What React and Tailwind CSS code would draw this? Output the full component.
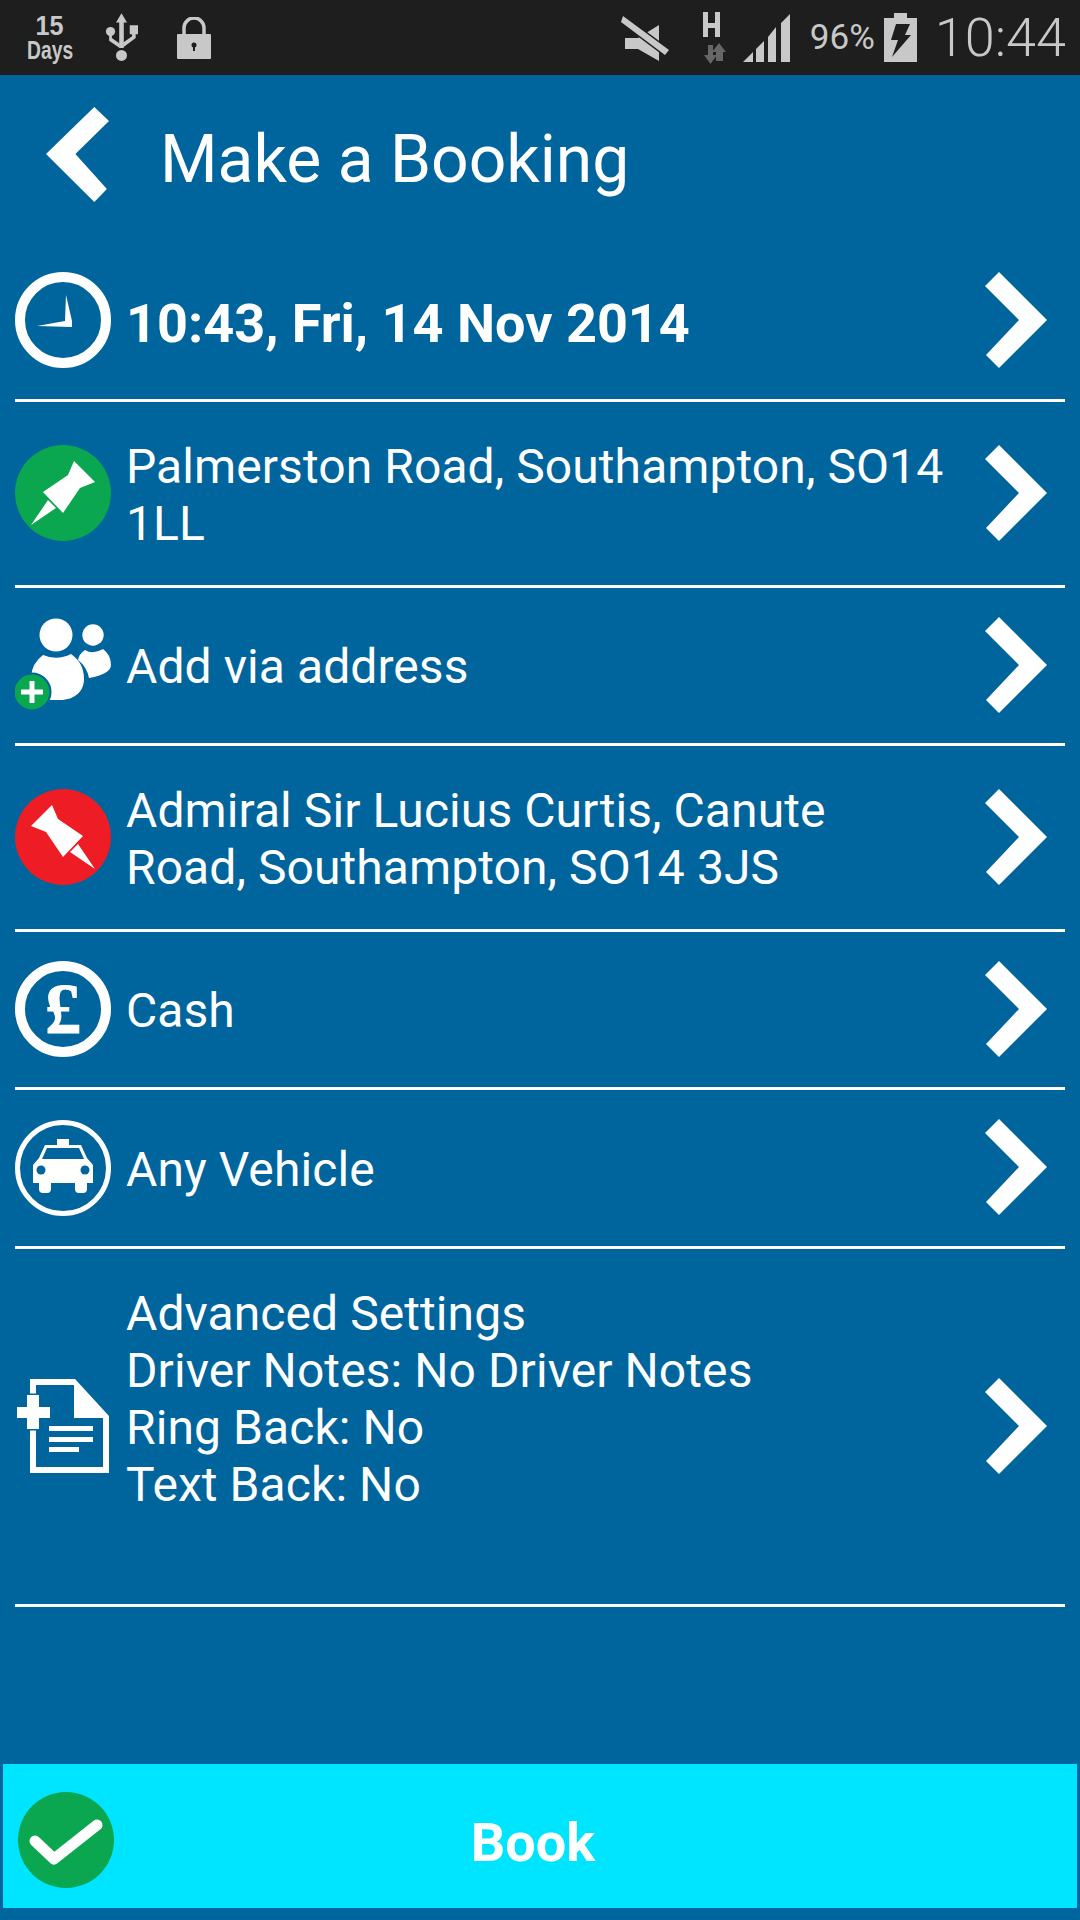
import React from "react";

const Chevron = () => (
  <svg width="62" height="96" viewBox="0 0 62 96" className="shrink-0 mr-[18px]">
    <path d="M14 0 L62 48 L14 96 L1 83 L34 48 L0 14 Z" fill="#fff" />
  </svg>
);

const Ring = ({ width = 10, children }) => (
  <svg width="96" height="96" viewBox="0 0 96 96">
    <circle cx="48" cy="48" r={48 - width / 2} fill="none" stroke="#fff" strokeWidth={width} />
    {children}
  </svg>
);

const ClockIcon = () => (
  <Ring>
    <path d="M51 23 L57 49 L57 55 L22 54 L50 49 Z" fill="#fff" />
  </Ring>
);

const PIN = "M59 16 L80 37 L65 43 L48 68 L28 47 L53 30 Z M33 55 L41 63 L16 80 Z";

const GreenPin = () => (
  <svg width="96" height="96" viewBox="0 0 96 96">
    <circle cx="48" cy="48" r="48" fill="#0aa750" />
    <path d={PIN} fill="#fff" />
  </svg>
);

const RedPin = () => (
  <svg width="96" height="96" viewBox="0 0 96 96">
    <circle cx="48" cy="48" r="48" fill="#ee1c25" />
    <path d={PIN} fill="#fff" transform="translate(96 0) scale(-1 1)" />
  </svg>
);

const PeopleIcon = () => (
  <svg width="96" height="96" viewBox="0 0 96 96">
    <circle cx="41" cy="18" r="16.5" fill="#fff" />
    <circle cx="78" cy="18" r="10.7" fill="#fff" />
    <path d="M28 38 Q42 44 56 37 Q69 46 69 62 C69 74 60 83 45 83 L25 83 L16 60 Q17 46 28 38 Z" fill="#fff" />
    <path d="M70 33 Q78 38 88 32 Q96 38 96 48 Q96 57 74 61 Q72 50 63 43 Q64 37 70 33 Z" fill="#fff" />
    <circle cx="17" cy="75" r="18.5" fill="#0aa750" stroke="#01659d" strokeWidth="2" />
    <path d="M14.5 64 H19.5 V72.5 H28 V77.5 H19.5 V86 H14.5 V77.5 H6 V72.5 H14.5 Z" fill="#fff" />
  </svg>
);

const PoundIcon = () => (
  <Ring>
    <text x="48" y="72" textAnchor="middle" fontSize="72" fontWeight="700" fontFamily="'Liberation Serif', serif" fill="#fff" stroke="#fff" strokeWidth="1">£</text>
  </Ring>
);

const TaxiIcon = () => (
  <Ring width={5}>
    <path d="M42 19 H54 V25 H42 Z" fill="#fff" />
    <path d="M30 25 H66 L72 38 L78 45 V63 H72 V69 Q72 73 68 73 H64 Q60 73 60 69 V63 H36 V69 Q36 73 32 73 H28 Q24 73 24 69 V63 H18 V45 L24 38 Z" fill="#fff" />
    <path d="M32 28 H64 L69 39 H27 Z" fill="#01659d" />
    <circle cx="26" cy="50" r="4.5" fill="#01659d" />
    <circle cx="70" cy="50" r="4.5" fill="#01659d" />
  </Ring>
);

const NotesIcon = () => (
  <svg width="96" height="96" viewBox="0 0 96 96">
    <path d="M15 1 H60 L94 38 V95 H15 Z M21 7 V89 H88 V40 H59 V7 Z" fill="#fff" fillRule="evenodd" />
    <path d="M12 17 H24 V29 H35 V40 H24 V51 H12 V40 H2 V29 H12 Z" fill="#fff" stroke="#01659d" strokeWidth="3" paintOrder="stroke" />
    <path d="M34 48 H78 V53 H34 Z M34 59 H78 V64 H34 Z M34 69 H64 V74 H34 Z" fill="#fff" />
  </svg>
);

const Row = ({ height, icon, children, bold }) => (
  <div className={`mx-[15px] flex shrink-0 items-center border-b-[3px] border-white ${bold ? "" : "pb-[2px]"} ${height}`}>
    <div className="w-24 shrink-0">{icon}</div>
    <div className={`ml-[15px] w-[826px] leading-[57px] ${bold ? "pt-[7px] text-[54px] font-bold" : "pt-[4px] text-[48px] tracking-[0.08px]"}`}>{children}</div>
    <div className="flex-1" />
    <Chevron />
  </div>
);

export default function App() {
  return (
    <div className="flex h-[1920px] w-[1080px] flex-col bg-[#01659d] text-white font-['Roboto',sans-serif]">
      <div className="flex h-[75px] shrink-0 items-center bg-[#1e1e1e] text-[#c8c8c8]">
        <div className="ml-[25px] flex w-[50px] flex-col items-center font-['Liberation_Sans',sans-serif] font-bold">
          <span className="text-[28px] leading-[24px] scale-x-[0.9]">15</span>
          <span className="text-[26px] leading-[24px] scale-x-[0.74]">Days</span>
        </div>
        <svg width="33" height="54" viewBox="0 0 36 54" className="ml-[30px]" fill="#c8c8c8">
          <path d="M18 0 L24 10 H20.5 V38 H15.5 V10 H12 Z" />
          <circle cx="18" cy="46" r="6" />
          <circle cx="6" cy="20" r="5" />
          <path d="M27 13 H36 V23 H33.5 V27 L20 37 V32 L29.5 25 V23 H27 Z" />
          <path d="M4.5 24 H7.5 V27 L16 33 V38 L4.5 30 Z" />
        </svg>
        <svg width="34" height="42" viewBox="0 0 34 42" className="ml-[39px]">
          <path d="M7 20 V11 A10 10 0 0 1 27 11 V20" fill="none" stroke="#c8c8c8" strokeWidth="3.5" />
          <rect x="0" y="17" width="34" height="25" rx="1" fill="#c8c8c8" />
          <circle cx="17" cy="28" r="2.5" fill="#1e1e1e" />
          <rect x="16" y="28" width="2" height="6" fill="#1e1e1e" />
        </svg>
        <div className="flex-1" />
        <svg width="48" height="48" viewBox="0 0 48 48" fill="#c8c8c8">
          <path d="M38 0 V11 L17 24 H4 V35 H17 L38 47 Z" />
          <path d="M2 2 L0 8 L44 41 L48 36 Z" stroke="#1e1e1e" strokeWidth="3" paintOrder="stroke" />
        </svg>
        <svg width="27" height="52" viewBox="0 0 27 52" className="ml-[31px]">
          <path d="M3 0 H8 V11 H15 V0 H20 V25 H15 V16 H8 V25 H3 Z" fill="#c8c8c8" />
          <path d="M8 33 H13 V43 H17 L10.5 52 L4 43 H8 Z" fill="#666" />
          <path d="M19 31 L26 40 H23 V49 H16 V40 H12 Z" fill="#666" />
        </svg>
        <svg width="48" height="50" viewBox="0 0 48 50" className="ml-[16px]" fill="#c8c8c8">
          <path d="M0 49 L10 39 V49 Z M13 36 L21 28 V49 H13 Z M25 24 L33 14 V49 H25 Z M38 10 L47 1 V49 H38 Z" />
        </svg>
        <span className="ml-[19px] w-[64px] text-[35px] leading-none whitespace-nowrap">96%</span>
        <svg width="33" height="50" viewBox="0 0 33 50" className="ml-[10px]">
          <path d="M10 0 H23 V5 H33 V49 H0 V5 H10 Z" fill="#c8c8c8" />
          <path d="M12 11 H26 L21 22 H27 L8 44 L14 27 H7 Z" fill="#1e1e1e" />
        </svg>
        <span className="ml-[18px] mr-[14px] text-[54px] leading-none font-light">10:44</span>
      </div>

      <div className="flex h-[165px] shrink-0 items-center">
        <svg width="63" height="96" viewBox="0 0 60 96" preserveAspectRatio="none" className="ml-[46px] mb-[5px]">
          <path d="M46 0 L60 14 L28 47 L58 82 L46 95 L0 47 Z" fill="#fff" />
        </svg>
        <h1 className="ml-[51px] pt-[4px] text-[66px] leading-none font-normal">Make a Booking</h1>
      </div>

      <Row height="h-[162px]" icon={<ClockIcon />} bold>10:43, Fri, 14 Nov 2014</Row>
      <Row height="h-[186px]" icon={<GreenPin />}>Palmerston Road, Southampton, SO14 1LL</Row>
      <Row height="h-[158px]" icon={<PeopleIcon />}>Add via address</Row>
      <Row height="h-[186px]" icon={<RedPin />}>Admiral Sir Lucius Curtis, Canute Road, Southampton, SO14 3JS</Row>
      <Row height="h-[158px]" icon={<PoundIcon />}>Cash</Row>
      <Row height="h-[159px]" icon={<div className="pt-[2px]"><TaxiIcon /></div>}>Any Vehicle</Row>
      <Row height="h-[358px]" icon={<NotesIcon />}>
        <div className="pb-[57px]">
          <div>Advanced Settings</div>
          <div>Driver Notes: No Driver Notes</div>
          <div>Ring Back: No</div>
          <div>Text Back: No</div>
        </div>
      </Row>

      <div className="flex-1" />

      <button className="mx-[3px] mb-[12px] flex h-[144px] shrink-0 items-center bg-[#00e5ff] pt-[8px]">
        <svg width="96" height="96" viewBox="0 0 96 96" className="ml-[15px] shrink-0">
          <circle cx="48" cy="48" r="48" fill="#0aa750" />
          <path d="M17 49 L36 67 L79 33" fill="none" stroke="#fff" strokeWidth="11" strokeLinecap="round" strokeLinejoin="round" />
        </svg>
        <span className="flex-1 pr-[125px] pt-[4px] text-center text-[54px] font-bold">Book</span>
      </button>
    </div>
  );
}
